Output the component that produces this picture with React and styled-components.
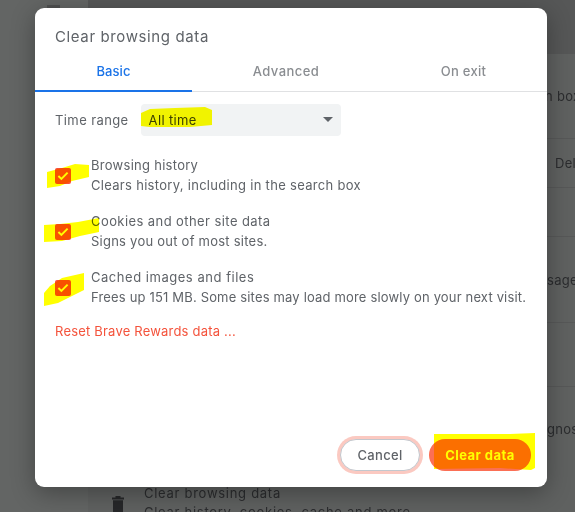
import React from "react";
import styled, { createGlobalStyle } from "styled-components";

const Global = createGlobalStyle`
  html, body { margin: 0; padding: 0; background: #636564; }
  body { width: 575px; height: 512px; overflow: hidden; font-family: Inter, "Liberation Sans", sans-serif; }
`;

const Page = styled.div`
  position: relative;
  width: 575px;
  height: 512px;
  overflow: hidden;
  background: #636564;
`;

const TopMark = styled.div`
  position: absolute;
  left: 47px;
  top: 5px;
  width: 13px;
  height: 4px;
  background: #4f5050;
`;

const SettingsCard = styled.div`
  margin-left: 88px;
  width: 487px;
  height: 512px;
  background: #5f6160;
  color: #2b2c2e;
  font-size: 13px;
  display: flex;
  flex-direction: column;
`;

const TopBand = styled.div`
  height: 54px;
  flex: none;
  background: #565757;
`;

const BgRow = styled.div`
  height: ${(p) => p.$h}px;
  flex: none;
  box-sizing: border-box;
  border-bottom: ${(p) => (p.$plain ? "0" : "1px solid #575858")};
  padding-left: ${(p) => p.$indent}px;
  display: flex;
  align-items: center;
  white-space: nowrap;
  letter-spacing: 0.3px;
`;

const ClearRow = styled.div`
  flex: none;
  display: flex;
  gap: 20px;
  padding: 13px 0 0 24px;
`;

const ClearText = styled.div`
  font-size: 13px;
  line-height: 19px;
  letter-spacing: 0.72px;
  white-space: nowrap;
  color: #2b2c2e;
`;

const Trash = styled.svg`
  flex: none;
  margin-top: 12px;
`;

const Dialog = styled.div`
  position: absolute;
  left: 35px;
  top: 8px;
  width: 512px;
  height: 479px;
  background: #fff;
  border-radius: 9px;
  box-shadow: 0 6px 24px rgba(0, 0, 0, 0.32);
  display: flex;
  flex-direction: column;
  overflow: hidden;
`;

const Title = styled.h2`
  margin: 0;
  padding: 18px 20px 0;
  height: 30px;
  flex: none;
  font-weight: 400;
  font-size: 15px;
  line-height: 22px;
  letter-spacing: 0.62px;
  color: #5f6368;
`;

const Tabs = styled.div`
  display: flex;
  flex: none;
  height: 35px;
  border-bottom: 1px solid #e0e1e3;
`;

const Tab = styled.div`
  position: relative;
  width: ${(p) => p.$w}px;
  flex: none;
  text-align: center;
  font-size: 13px;
  font-weight: 500;
  line-height: 26px;
  padding-top: 2px;
  letter-spacing: ${(p) => p.$track}px;
  color: ${(p) => (p.$active ? "#1a73e8" : "#8a8d91")};
  &::after {
    content: "";
    display: ${(p) => (p.$active ? "block" : "none")};
    position: absolute;
    left: 0;
    right: 0;
    bottom: -1px;
    height: 2px;
    background: #1a73e8;
  }
`;

const Body = styled.div`
  padding: 12px 20px 0;
  flex: 1;
  display: flex;
  flex-direction: column;
`;

const RangeRow = styled.div`
  display: flex;
  align-items: center;
  gap: 12px;
  height: 32px;
  font-size: 13px;
  letter-spacing: 0.4px;
  color: #5f6368;
`;

const Select = styled.div`
  position: relative;
  box-sizing: border-box;
  width: 200px;
  height: 32px;
  padding-left: 8px;
  border-radius: 4px;
  background: #f1f3f4;
  line-height: 32px;
  font-size: 13px;
  letter-spacing: 0.35px;
  color: #3c4043;
`;

const Caret = styled.span`
  position: absolute;
  right: 8px;
  top: 13px;
  width: 0;
  height: 0;
  border-left: 5px solid transparent;
  border-right: 5px solid transparent;
  border-top: 5px solid #5f6368;
`;

const List = styled.div`
  margin-top: 19px;
  display: flex;
  flex-direction: column;
  gap: 16px;
`;

const CheckRow = styled.div`
  display: flex;
  align-items: center;
  gap: 20px;
`;

const Box = styled.span`
  flex: none;
  width: 16px;
  height: 16px;
  margin-top: 2px;
  border-radius: 2px;
  background: #f8503c;
  display: flex;
  align-items: center;
  justify-content: center;
`;

const CheckText = styled.div`
  display: flex;
  flex-direction: column;
  font-size: 13px;
  line-height: 20px;
  color: #5f6368;
  white-space: nowrap;
`;

const Line = styled.span`
  letter-spacing: ${(p) => p.$track}px;
`;

const ResetLink = styled.div`
  margin-top: 14px;
  font-size: 13px;
  line-height: 20px;
  letter-spacing: 0.2px;
  color: #f4533c;
`;

const Footer = styled.div`
  display: flex;
  flex: none;
  justify-content: flex-end;
  gap: 9px;
  padding: 0 16px 16px 0;
`;

const Cancel = styled.button`
  box-sizing: border-box;
  width: 80px;
  height: 32px;
  margin: 0;
  padding: 0;
  border-radius: 16px;
  border: 1px solid #c3c7cd;
  box-shadow: 0 0 0 3px #fbc9c1;
  background: #fff;
  color: #5f6368;
  font: 500 13px Inter, "Liberation Sans", sans-serif;
  letter-spacing: 0.3px;
`;

const Primary = styled.button`
  box-sizing: border-box;
  width: 102px;
  height: 32px;
  margin: 0;
  padding: 0;
  border: 0;
  border-radius: 16px;
  background: #fb6f55;
  color: #fff;
  font: 700 13px Inter, "Liberation Sans", sans-serif;
  letter-spacing: 0.45px;
`;

const Highlights = styled.svg`
  position: absolute;
  left: 0;
  top: 0;
  pointer-events: none;
  mix-blend-mode: multiply;
`;

const Mark = () => (
  <svg width="12" height="10" viewBox="0 0 12 10" fill="none">
    <path d="M1.4 5 L4.4 8 L10.6 1.6" stroke="#fff" strokeWidth="1.9" />
  </svg>
);

const rows = [
  { a: "Browsing history", at: 0.28, b: "Clears history, including in the search box", bt: 0.3 },
  { a: "Cookies and other site data", at: 0.42, b: "Signs you out of most sites.", bt: 0.24 },
  { a: "Cached images and files", at: 0.53, b: "Frees up 151 MB. Some sites may load more slowly on your next visit.", bt: 0.17 },
];

export default function App() {
  return (
    <Page>
      <Global />
      <TopMark />
      <SettingsCard>
        <TopBand />
        <BgRow $h={85} $indent={457}>n box</BgRow>
        <BgRow $h={49} $indent={467}>Del</BgRow>
        <BgRow $h={49} />
        <BgRow $h={86} $indent={459}>sage</BgRow>
        <BgRow $h={64} />
        <BgRow $h={84} $indent={459} $plain>gnos</BgRow>
        <ClearRow>
          <Trash width="12" height="16" viewBox="0 0 12 16">
            <path d="M0 1.6h12v1.8H0zM3.5 0h5v1.6h-5zM1 4.2h10V16H1z" fill="#262729" />
          </Trash>
          <ClearText>
            Clear browsing data
            <br />
            Clear history, cookies, cache and more
          </ClearText>
        </ClearRow>
      </SettingsCard>
      <Dialog>
        <Title>Clear browsing data</Title>
        <Tabs>
          <Tab $active $w={157} $track={0.05}>Basic</Tab>
          <Tab $w={188} $track={0.45}>Advanced</Tab>
          <Tab $w={167} $track={0.25}>On exit</Tab>
        </Tabs>
        <Body>
          <RangeRow>
            Time range
            <Select>
              All time
              <Caret />
            </Select>
          </RangeRow>
          <List>
            {rows.map((r) => (
              <CheckRow key={r.a}>
                <Box>
                  <Mark />
                </Box>
                <CheckText>
                  <Line $track={r.at}>{r.a}</Line>
                  <Line $track={r.bt}>{r.b}</Line>
                </CheckText>
              </CheckRow>
            ))}
          </List>
          <ResetLink>Reset Brave Rewards data ...</ResetLink>
        </Body>
        <Footer>
          <Cancel>Cancel</Cancel>
          <Primary>Clear data</Primary>
        </Footer>
      </Dialog>
      <Highlights width="575" height="512" viewBox="0 0 575 512">
        <g fill="#ffff00">
          <path d="M141 113 L150 109 L175 108 L205 107 L212 110 L212 125 L190 127 L150 127 L141 126 Z" />
          <path d="M47 172 L62 168 L75 164 L89 165 L89 177 L72 181 L60 186 L47 188 Z" />
          <path d="M44 225 L60 224 L78 222 L99 218 L99 232 L80 236 L62 241 L44 242 Z" />
          <path d="M44 293 L50 286 L62 278 L84 273 L84 290 L70 297 L58 303 L44 306 Z" />
          <path d="M434 434 L510 434 L535 433 L535 468 L531 470 L500 468 L434 469 Z" />
        </g>
      </Highlights>
    </Page>
  );
}
